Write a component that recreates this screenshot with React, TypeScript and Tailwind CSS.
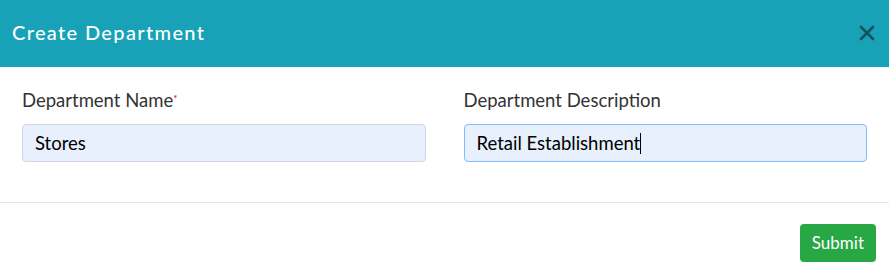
export default function App() {
  return (
    <div className="w-[889px] h-[279px] bg-white font-['Lato','Open_Sans',sans-serif] text-[#333]">
      {/* Header */}
      <div className="h-[67px] bg-[#17a2b8] flex items-center justify-between pl-3 pr-[14px] pb-1">
        <h4 className="text-white text-[20px] tracking-[1.35px] font-medium">Create Department</h4>
        <svg width="16" height="16" viewBox="0 0 16 16" className="text-[#16515d] mt-[2px]">
          <path d="M2 2L14 14M14 2L2 14" stroke="currentColor" strokeWidth="2.6" strokeLinecap="round" />
        </svg>
      </div>

      {/* Body */}
      <div className="px-[22px] pt-[22px] pb-[40px] grid grid-cols-2 gap-x-[38px] border-b border-[#e5e5e5]">
        <div>
          <label className="block text-[18.5px] leading-[22px] mb-[13px]">
            Department Name<sup className="text-red-600 text-[10px]">*</sup>
          </label>
          <input
            defaultValue="Stores"
            className="w-full h-[38px] px-3 rounded bg-[#e8f0fe] border border-[#cfd6e0] text-[18.5px] text-black outline-none"
          />
        </div>
        <div>
          <label className="block text-[18.5px] leading-[22px] mb-[13px]">Department Description</label>
          <div className="relative">
            <input
              defaultValue="Retail Establishment"
              className="w-full h-[38px] px-3 rounded bg-[#e8f0fe] border border-[#80bdff] text-[18.5px] text-black outline-none"
            />
            {/* text caret */}
            <span className="absolute left-[176px] top-[9px] w-px h-[21px] bg-black" />
          </div>
        </div>
      </div>

      {/* Footer */}
      <div className="flex justify-end pt-[21px] pr-[13px]">
        <button className="h-[38px] px-3 rounded bg-[#28a745] text-white text-[17px]">Submit</button>
      </div>
    </div>
  );
}
